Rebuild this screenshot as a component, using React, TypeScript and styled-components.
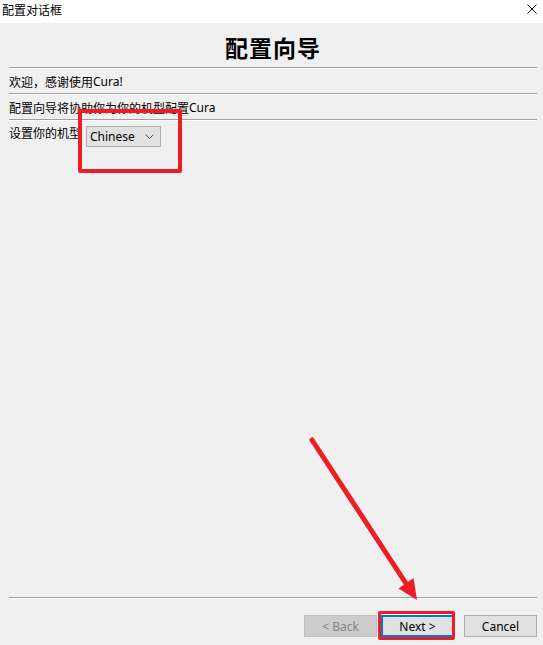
import React from "react";
import styled, { createGlobalStyle } from "styled-components";

const Global = createGlobalStyle`
  html, body { margin: 0; padding: 0; background: #f0f0f0; }
  body { font-family: "Noto Sans", "Noto Sans CJK SC", sans-serif; }
`;

const Window = styled.div`
  position: relative;
  width: 543px;
  height: 645px;
  display: flex;
  flex-direction: column;
  overflow: hidden;
  font-family: "Noto Sans", "Noto Sans CJK SC", sans-serif;
  font-size: 12px;
  color: #000;
`;

const TitleBar = styled.div`
  height: 23px;
  flex: none;
  background: #fff;
  display: flex;
  align-items: center;
  justify-content: space-between;
  padding: 0 6px 0 2px;
`;

const TitleText = styled.span`
  font-family: "Noto Sans CJK SC", sans-serif;
  font-size: 12px;
  line-height: 14px;
  margin-top: -4px;
`;

const CloseIcon = styled.svg`
  width: 10px;
  height: 10px;
  margin-top: -6px;
`;

const Body = styled.div`
  flex: 1;
  background: #f0f0f0;
  display: flex;
  flex-direction: column;
  padding: 0 6px 8px 9px;
`;

const Heading = styled.h1`
  margin: 0;
  height: 44px;
  flex: none;
  display: flex;
  align-items: center;
  justify-content: center;
  font-family: "Noto Sans CJK SC", sans-serif;
  font-weight: 700;
  font-size: 23px;
  letter-spacing: 1px;
  padding-top: 4px;
  box-sizing: border-box;
`;

const Divider = styled.div`
  flex: none;
  height: 0;
  border-top: 1px solid #a0a0a0;
  border-bottom: 1px solid #ffffff;
`;

const TextRow = styled.div`
  height: 24px;
  flex: none;
  display: flex;
  align-items: center;
  font-family: "Noto Sans CJK SC", sans-serif;
  font-size: 12px;
`;

const Latin = styled.span`
  font-family: "Noto Sans", sans-serif;
`;

const FieldRow = styled.div`
  flex: none;
  display: flex;
  align-items: flex-start;
  padding-top: 5px;
  gap: 5px;
`;

const FieldLabel = styled.span`
  font-family: "Noto Sans CJK SC", sans-serif;
  line-height: 14px;
  margin-top: 0px;
`;

const Select = styled.div`
  width: 75px;
  height: 21px;
  box-sizing: border-box;
  background: #e1e1e1;
  border: 1px solid #adadad;
  display: flex;
  align-items: center;
  justify-content: space-between;
  padding: 0 6px 0 3px;
  font-family: "Noto Sans", sans-serif;
  font-size: 12px;
`;

const Chevron = styled.svg`
  width: 9px;
  height: 5px;
`;

const Spacer = styled.div`
  flex: 1;
`;

const ButtonBar = styled.div`
  flex: none;
  display: flex;
  justify-content: flex-end;
  margin-top: 16px;
`;

const Button = styled.div<{ $variant?: "disabled" | "default" | "normal"; $gap?: number }>`
  width: 73px;
  height: 22px;
  box-sizing: border-box;
  display: flex;
  align-items: center;
  justify-content: center;
  font-family: "Noto Sans", sans-serif;
  font-size: 12px;
  margin-right: ${(p) => p.$gap ?? 0}px;
  background: ${(p) => (p.$variant === "disabled" ? "#cccccc" : "#e1e1e1")};
  color: ${(p) => (p.$variant === "disabled" ? "#838383" : "#000")};
  border: ${(p) =>
    p.$variant === "disabled"
      ? "1px solid #bfbfbf"
      : p.$variant === "default"
      ? "2px solid #0078d7"
      : "1px solid #adadad"};
`;

const Highlight = styled.div<{ $l: number; $t: number; $w: number; $h: number; $b: number }>`
  position: absolute;
  left: ${(p) => p.$l}px;
  top: ${(p) => p.$t}px;
  width: ${(p) => p.$w}px;
  height: ${(p) => p.$h}px;
  box-sizing: border-box;
  border: ${(p) => p.$b}px solid #ee1c25;
  border-radius: 2px;
  pointer-events: none;
`;

const ArrowLayer = styled.svg`
  position: absolute;
  left: 0;
  top: 0;
  width: 543px;
  height: 645px;
  pointer-events: none;
`;

export default function App() {
  return (
    <>
      <Global />
      <Window>
        <TitleBar>
          <TitleText>配置对话框</TitleText>
          <CloseIcon viewBox="0 0 10 10">
            <path d="M0.5 0.5 L9.5 9.5 M9.5 0.5 L0.5 9.5" stroke="#000" strokeWidth="1" fill="none" />
          </CloseIcon>
        </TitleBar>
        <Body>
          <Heading>配置向导</Heading>
          <Divider />
          <TextRow>
            欢迎，感谢使用<Latin>Cura!</Latin>
          </TextRow>
          <Divider />
          <TextRow>
            配置向导将协助你为你的机型配置<Latin>Cura</Latin>
          </TextRow>
          <Divider />
          <FieldRow>
            <FieldLabel>设置你的机型</FieldLabel>
            <Select>
              <span>Chinese</span>
              <Chevron viewBox="0 0 9 5">
                <path d="M0.5 0.5 L4.5 4.5 L8.5 0.5" stroke="#555" strokeWidth="1" fill="none" />
              </Chevron>
            </Select>
          </FieldRow>
          <Spacer />
          <Divider />
          <ButtonBar>
            <Button $variant="disabled" $gap={4}>&lt; Back</Button>
            <Button $variant="default" $gap={10}>Next &gt;</Button>
            <Button $variant="normal">Cancel</Button>
          </ButtonBar>
        </Body>
        <Highlight $l={78} $t={109} $w={104} $h={64} $b={4} />
        <Highlight $l={378} $t={611} $w={77} $h={29} $b={3} />
        <ArrowLayer viewBox="0 0 543 645">
          <line x1="312" y1="440" x2="409" y2="588" stroke="#ee1c25" strokeWidth="5" strokeLinecap="round" />
          <polygon points="417,600 413.5,578 398.5,588.5" fill="#ee1c25" />
        </ArrowLayer>
      </Window>
    </>
  );
}
